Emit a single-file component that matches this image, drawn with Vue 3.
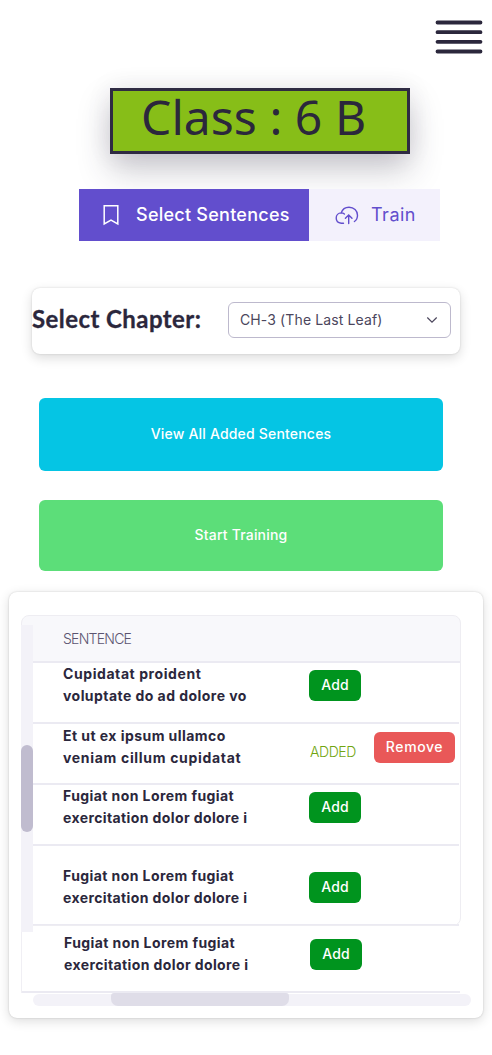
<script setup>
const rows = [
  { id: 1, lines: [{ text: 'Cupidatat proident', spacing: 0.58 }, { text: 'voluptate do ad dolore vo', spacing: 0.45 }] },
  { id: 2, lines: [{ text: 'Et ut ex ipsum ullamco', spacing: 0.45 }, { text: 'veniam cillum cupidatat', spacing: 0.68 }], added: true },
  { id: 3, lines: [{ text: 'Fugiat non Lorem fugiat', spacing: 0.42 }, { text: 'exercitation dolor dolore i', spacing: 0.39 }] },
  { id: 4, lines: [{ text: 'Fugiat non Lorem fugiat', spacing: 0.42 }, { text: 'exercitation dolor dolore i', spacing: 0.39 }] },
  { id: 5, lines: [{ text: 'Fugiat non Lorem fugiat', spacing: 0.42 }, { text: 'exercitation dolor dolore i', spacing: 0.39 }] },
]
</script>

<template>
  <main class="page">
    <header class="topbar">
      <svg class="menu" width="48" height="36" viewBox="0 0 48 36" aria-label="Menu">
        <path d="M2.5 4.5H45.5M2.5 14.2H45.5M2.5 23.8H45.5M2.5 33.5H45.5" />
      </svg>
    </header>

    <h1 class="class-name">Class : 6 B</h1>

    <nav class="tabs">
      <button class="tab active">
        <svg width="18" height="22" viewBox="0 0 18 22"><path d="M2.2 1.7H15.8V20L9 16.2L2.2 20Z" /></svg>
        <span class="tab-select">Select Sentences</span>
      </button>
      <button class="tab train">
        <svg width="24" height="19" viewBox="0 0 24 19">
          <path d="M8.5 17.3H6.2C3.3 17 1.2 14.8 1.2 12.1C1.2 9.2 3.3 7 6.2 6.9C7.4 6.9 8.6 7.3 9.4 8M6.2 6.9C7.3 3.5 10.3 1.2 14 1.2C18.9 1.2 22.5 4.7 22.5 9.2C22.5 12.1 21.4 14.2 19.4 15.5M13.7 17.5V9M10.4 12.2L13.7 8.9L17 12.2" />
        </svg>
        <span>Train</span>
      </button>
    </nav>

    <section class="chapter">
      <h2>Select Chapter:</h2>
      <div class="select">
        <span>CH-3 (The Last Leaf)</span>
        <svg width="12" height="8" viewBox="0 0 12 8"><path d="M1.3 1.5L6 6.2L10.7 1.5" /></svg>
      </div>
    </section>

    <div class="actions">
      <button class="view">View All Added Sentences</button>
      <button class="start">Start Training</button>
    </div>

    <section class="panel">
      <div class="table">
        <div class="head">SENTENCE</div>
        <div v-for="row in rows" :key="row.id" class="row" :class="'r' + row.id">
          <div class="sentence">
            <div v-for="(line, i) in row.lines" :key="i" :style="{ letterSpacing: line.spacing + 'px' }">{{ line.text }}</div>
          </div>
          <template v-if="row.added">
            <span class="added">ADDED</span>
            <button class="btn remove">Remove</button>
          </template>
          <button v-else class="btn add">Add</button>
        </div>
        <div class="frame"></div>
        <div class="vtrack"><div class="vthumb"></div></div>
      </div>
      <div class="htrack"><div class="hthumb"></div></div>
    </section>
  </main>
</template>

<style>
body { background: #fff; }
</style>

<style scoped>
* { box-sizing: border-box; }
.page { width: 492px; height: 1055px; overflow: hidden; font-family: Inter, "Liberation Sans", sans-serif; color: #2b273c; }
button { border: 0; font-family: inherit; padding: 0; white-space: nowrap; }
svg { fill: none; stroke: currentColor; flex: none; display: block; }
.topbar { height: 88px; padding: 18px 9px 0 0; display: flex; justify-content: flex-end; }
.menu { stroke-width: 3.8; stroke-linecap: round; color: #2b273c; }
.class-name { margin: 0 0 0 110px; width: 300px; height: 66px; border: 3px solid #2f2b43; background: #87be18; padding-left: 28px; font: 400 48px/52px "Noto Sans", sans-serif; color: #2b273c; box-shadow: 0 16px 32px rgba(47, 43, 67, .25), 0 0 26px rgba(47, 43, 67, .08); white-space: nowrap; letter-spacing: .05px; }
.tabs { position: relative; display: flex; margin: 35px 0 0 79px; width: 361px; height: 52px; }
.tab { display: flex; align-items: center; font-size: 18px; line-height: 24px; color: #624ecd; background: #f3f1fc; width: 131px; }
.tab.active { width: 230px; background: #624ecd; color: #fff; font-weight: 500; padding-left: 23px; }
.tab.active svg { stroke-width: 1.5; margin-right: 16px; }
.tab-select { letter-spacing: .25px; }
.train { padding-left: 26px; letter-spacing: .5px; }
.train svg { stroke-width: 1.4; margin-right: 12px; stroke-linecap: round; }
.chapter { display: flex; margin: 47px 0 0 32px; width: 428px; height: 66px; border-radius: 8px; box-shadow: 0 0 2px rgba(0, 0, 0, .16), 0 4px 12px rgba(0, 0, 0, .14); background: #fff; }
h2 { margin: 0; width: 196px; font: 700 24px/62px Lato, sans-serif; white-space: nowrap; letter-spacing: .43px; -webkit-text-stroke: .3px currentColor; }
.select { display: flex; align-items: center; justify-content: space-between; margin-top: 14px; width: 223px; height: 36px; border: 1px solid #bdb9cd; border-radius: 6px; padding: 0 12px 0 11px; font-size: 14px; color: #4b465c; letter-spacing: .12px; }
.select span { padding-bottom: 1px; }
.select svg { stroke-width: 1.2; }
.actions { display: flex; flex-direction: column; gap: 29px; margin: 44px 0 0 39px; width: 404px; }
.actions button { height: 73px; border-radius: 6px; color: #fff; font-size: 14px; font-weight: 500; letter-spacing: .19px; padding-bottom: 2px; }
.actions .view { background: #05c5e4; }
.actions .start { background: #5cde79; height: 71px; }
.panel { margin: 21px 0 0 9px; width: 474px; height: 426px; border-radius: 8px; padding: 24px 0 0 12px; background: #fff; box-shadow: 0 0 2px rgba(0, 0, 0, .18), 0 3px 12px rgba(0, 0, 0, .14); }
.table { position: relative; width: 440px; height: 378px; }
.table::before { content: ""; position: absolute; left: 0; top: 310px; width: 1px; height: 67px; background: #f0eff4; }
.head { height: 47px; padding-left: 42px; border-bottom: 2px solid #ebeaf2; border-radius: 8px 8px 0 0; background: #f8f8fb; color: #5b5470; font-size: 14px; font-weight: 300; line-height: 46px; letter-spacing: -.75px; }
.row { display: flex; align-items: flex-start; width: 438px; height: 61px; border-bottom: 2px solid #ebeaf2; padding-left: 42px; }
.sentence { width: 246px; font-size: 14px; font-weight: 700; line-height: 22px; white-space: nowrap; }
.r2 .sentence { padding-top: 1px; }
.r4 { height: 80px; padding-top: 19px; }
.r5 { height: 67px; width: 439px; padding: 6px 0 0 43px; }
.btn { height: 31px; border-radius: 6px; margin-top: 7px; padding-bottom: 2px; color: #fff; font-size: 14px; font-weight: 500; letter-spacing: .1px; }
.add { width: 52px; background: #00941e; }
.remove { width: 81px; background: #e95858; margin-top: 8px; letter-spacing: .6px; }
.added { width: 65px; padding: 17px 0 0 1px; font-size: 14px; line-height: 22px; color: #70a510; font-weight: 300; letter-spacing: -.4px; }
.frame { position: absolute; left: 0; top: -1px; width: 440px; height: 311px; border: 1px solid #eeedf2; border-radius: 8px; pointer-events: none; }
.vtrack { position: absolute; left: 0; top: 9px; width: 12px; height: 307px; background: #f3f2f8; }
.vthumb { margin-top: 120px; height: 87px; border-radius: 6px; background: #c0bccf; }
.htrack { margin-left: 12px; width: 438px; height: 12px; border-radius: 6px; background: #f3f2f8; display: flex; }
.hthumb { margin: -1px 0 0 78px; width: 178px; height: 13px; border-radius: 3px 3px 7px 7px; background: #dfdde8; }
</style>
